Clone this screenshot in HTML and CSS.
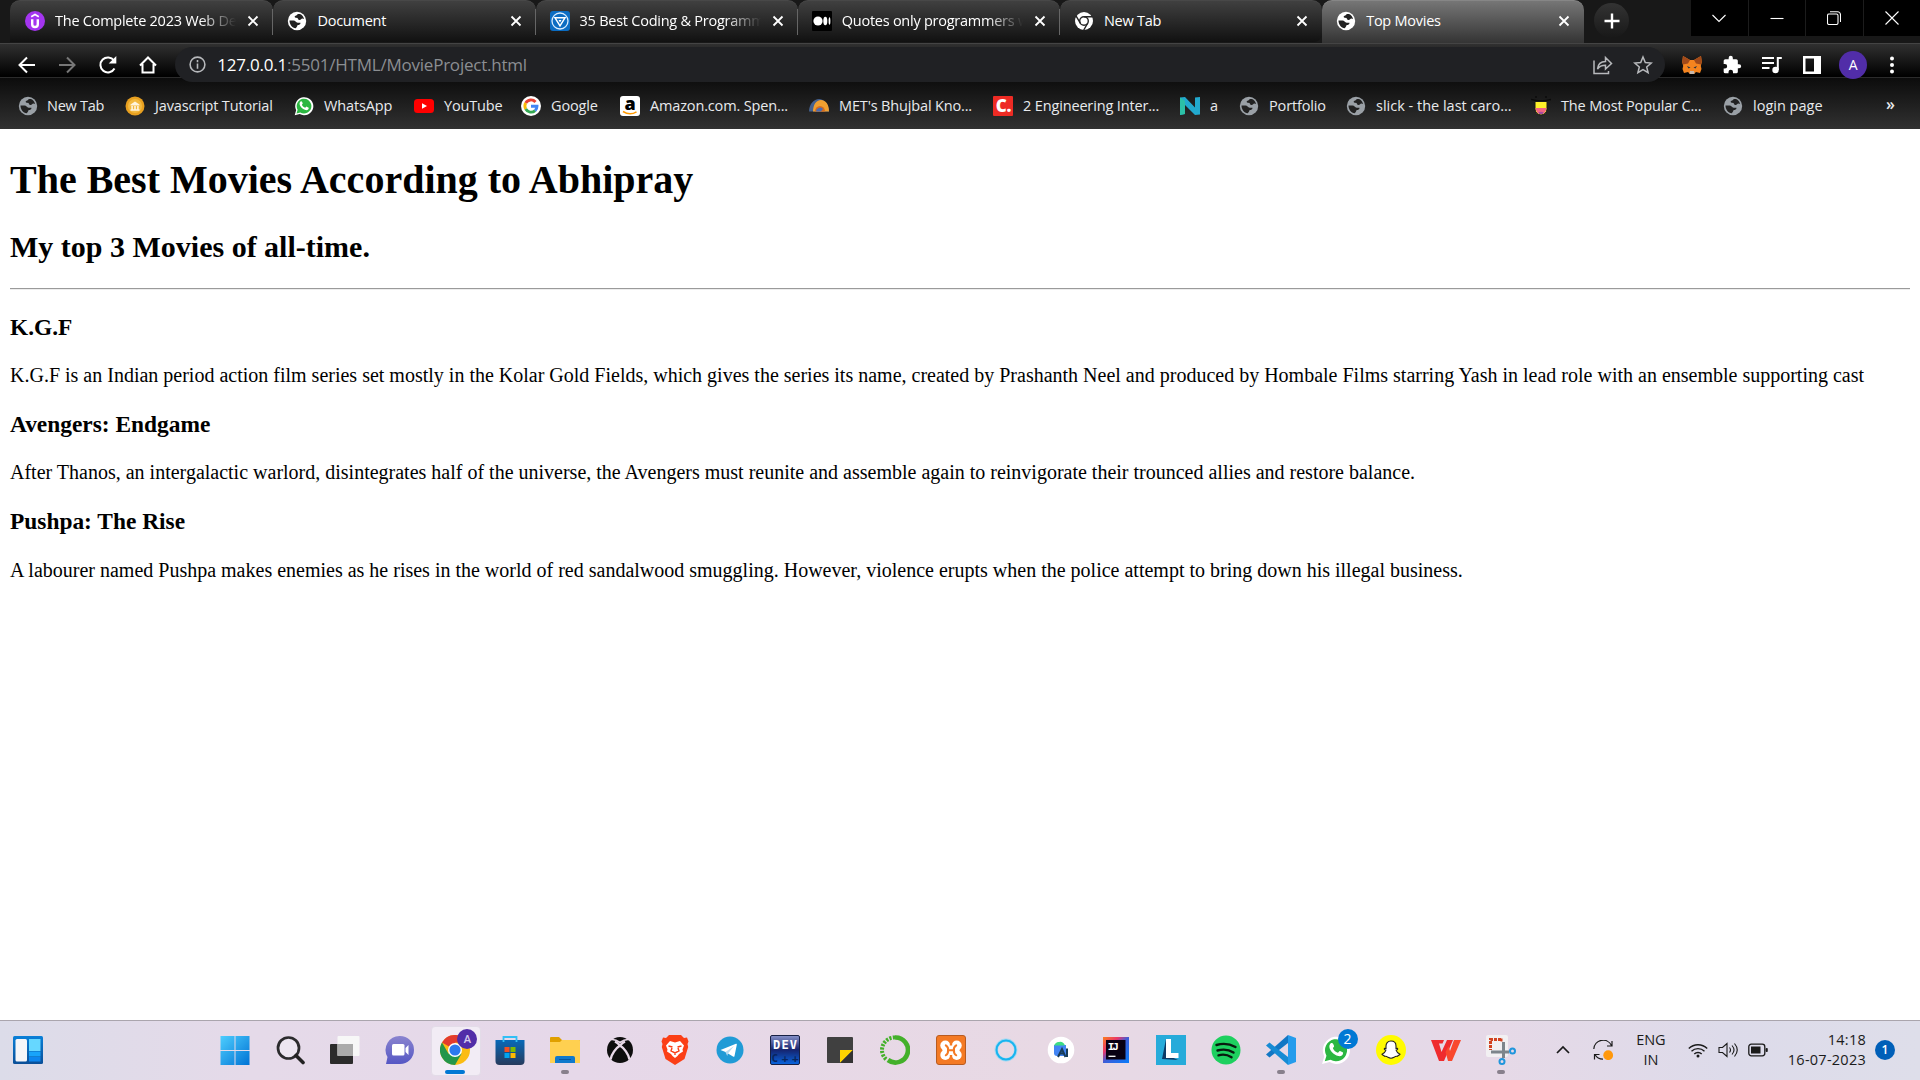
FILE: index.html
```html
<!DOCTYPE html>
<html lang="en">
<head>
<meta charset="utf-8">
<title>Top Movies</title>
<link rel="stylesheet" href="styles.css">
</head>
<body>
<svg class="defs" width="0" height="0">
  <symbol id="globe" viewBox="0 0 20 20"><circle cx="10" cy="10" r="9.200" fill="currentColor"/><path class="land" d="M2.500 9.500h4c2 0 2.200 2.200 4.200 2.200h2.800c0 2-1.400 2-2.600 2.400-1 .4-.6 2.200-2.200 3.200C5 16.800 2.500 13.500 2.500 9.500zM10.500 3c0 2-2.800 1.300-2.800 2.800 0 1.600 3 .5 3.400 2.200.3 1.500 2.400 1.300 3 .3.500-1 2-.8 3-.2-.5-2.300-2-4.300-4.100-5.100z"/></symbol>
  <symbol id="x" viewBox="0 0 12 12"><path d="M1.500 1.500l9 9M10.500 1.500l-9 9" stroke="#fff" stroke-width="1.800"/></symbol>
  <symbol id="wa" viewBox="0 0 28 28"><path d="M1 27l2-7A12.700 12.700 0 1 1 8 25.300z" fill="#fff"/><path d="M3.500 24.500l1.600-5.200a10.300 10.300 0 1 1 3.800 3.800z" fill="#2bb741"/><path d="M9.200 7.800c1.500-1 2.200.2 3 2.500.2.800-1.200 1.600-1 2.200 1 2 2.500 3.200 4.400 4 .8 0 1.400-2 2.200-1.600l2.800 1.400c.4 2.600-2.200 4-4.400 3.400C11.500 18.400 8 14.500 7.800 11c0-1.400.6-2.600 1.400-3.200z" fill="#fff"/></symbol>
</svg>
<header class="browser">
  <div class="tabs">
    <div class="tab first"><svg class="fav" viewBox="0 0 20 20"><circle cx="10" cy="10" r="10" fill="#a435f0"/><path d="M6.200 5.800L10 3.500l3.800 2.300" fill="none" stroke="#fff" stroke-width="1.600"/><path d="M7.200 8.200v5a2.800 2.800 0 0 0 5.600 0v-5" fill="none" stroke="#fff" stroke-width="2.400"/></svg><span class="title fade">The Complete 2023 Web Development</span><svg class="close"><use href="#x"/></svg></div>
    <div class="tab"><svg class="fav globe-w"><use href="#globe"/></svg><span class="title">Document</span><svg class="close"><use href="#x"/></svg></div>
    <div class="tab"><svg class="fav" viewBox="0 0 20 20"><rect width="20" height="20" rx="3" fill="#0a6cc2"/><circle cx="10" cy="10" r="8" fill="none" stroke="#d8ecff" stroke-width="1.300"/><path d="M5 6.800h10L10 14.800z" fill="none" stroke="#fff" stroke-width="1.500"/><path d="M8.500 9h3L10 11.500z" fill="#fff"/></svg><span class="title fade">35 Best Coding &amp; Programming Quotes</span><svg class="close"><use href="#x"/></svg></div>
    <div class="tab"><svg class="fav" viewBox="0 0 20 20"><rect width="20" height="20" rx="1" fill="#000"/><circle cx="6" cy="10" r="4.600" fill="#fff"/><ellipse cx="13.300" cy="10" rx="2" ry="4.300" fill="#fff"/><ellipse cx="17.500" cy="10" rx=".9" ry="3.800" fill="#fff"/></svg><span class="title fade">Quotes only programmers will get</span><svg class="close"><use href="#x"/></svg></div>
    <div class="tab last"><svg class="fav" viewBox="0 0 20 20"><circle cx="10" cy="10" r="9" fill="#fff"/><g fill="none" stroke="#262626" stroke-width="1.400"><circle cx="10" cy="10" r="4.300"/><path d="M10 5.700h8.500M6.300 12.200L2 4.800M13.700 12.200l-4.200 7.300"/></g></svg><span class="title">New Tab</span><svg class="close"><use href="#x"/></svg></div>
    <div class="tab active"><svg class="fav globe-w"><use href="#globe"/></svg><span class="title">Top Movies</span><svg class="close"><use href="#x"/></svg></div>
    <div class="plus"><svg width="16" height="16" viewBox="0 0 16 16"><path d="M8 .5v15M.5 8h15" stroke="#fff" stroke-width="2.400"/></svg></div>
    <div class="winbtns">
      <span><svg width="14" height="14" viewBox="0 0 14 14"><path d="M.5 4L7 10.500 13.500 4"/></svg></span>
      <span><svg width="14" height="14" viewBox="0 0 14 14"><path d="M.5 7.500h13"/></svg></span>
      <span><svg width="14" height="14" viewBox="0 0 14 14"><rect x=".5" y="3" width="10.500" height="10.500" rx="1.500"/><path d="M3 .8h7.500a3 3 0 0 1 3 3V11"/></svg></span>
      <span><svg width="14" height="14" viewBox="0 0 14 14"><path d="M.5.500l13 13M13.500.500l-13 13"/></svg></span>
    </div>
  </div>
  <div class="toolbar">
    <svg class="tb" viewBox="0 0 20 20"><path d="M18 10H3M10 2.500L2.500 10l7.500 7.500"/></svg>
    <svg class="tb dim" viewBox="0 0 20 20"><path d="M2 10h15M10 2.500l7.500 7.500-7.500 7.500"/></svg>
    <svg class="tb" viewBox="0 0 20 20"><path d="M16.500 13.500A7.500 7.500 0 1 1 16 5.500"/><path class="fill" d="M18.300 1v7.600h-7.600z"/></svg>
    <svg class="tb" viewBox="0 0 20 20"><path d="M2 10.500L10 2.500l8 8M4.500 9v8.500h11V9"/></svg>
    <div class="omnibox">
      <svg class="info" viewBox="0 0 18 18"><circle cx="9" cy="9" r="7" /><path d="M9 8v5M9 4.800v2"/></svg>
      <span class="url"><b>127.0.0.1</b>:5501/HTML/MovieProject.html</span>
      <svg class="share" viewBox="0 0 20 20"><path d="M1 5.500V18.500h14.500V16M4.500 14c.5-5 3.500-7.500 8-7.500V2.500L18.500 8.500l-6 5.500v-3.800c-3.500 0-6 .8-8 3.800z"/></svg>
      <svg class="star" viewBox="0 0 20 20"><path d="M10 2l2.300 5.500 6 .5-4.600 3.900 1.400 5.800-5.100-3.100-5.100 3.100 1.400-5.800L1.700 8l6-.5z"/></svg>
    </div>
    <svg class="ext" viewBox="0 0 20 20"><path d="M1 1l7 4h4l7-4 .8 6-1 4 .7 3-1.500 4-4-1-2 2H8l-2-2-4 1-1.500-4 .7-3-1-4z" fill="#f5841f"/><path d="M1 1l7 4-2 3.500L1 9.500.2 7zM19 1l-7 4 2 3.500 5 1L19.800 7z" fill="#a24a1a"/><path d="M5 11l3.500 1.500-2 1zM15 11l-3.500 1.500 2 1z" fill="#233447"/><path d="M8 16h4l.5 3h-5z" fill="#c8b8ac"/></svg>
    <svg class="ext" viewBox="0 0 24 24"><path fill="#fff" d="M20.500 11H19V7a2 2 0 0 0-2-2h-4V3.500a2.500 2.500 0 0 0-5 0V5H4a2 2 0 0 0-2 2v3.800h1.500a2.700 2.700 0 0 1 0 5.400H2V20a2 2 0 0 0 2 2h3.800v-1.500a2.700 2.700 0 0 1 5.400 0V22H17a2 2 0 0 0 2-2v-4h1.500a2.500 2.500 0 0 0 0-5z"/></svg>
    <svg class="ext" viewBox="0 0 20 20"><path d="M0 3h12M0 8h12M0 13h7.500M15.800 15V3h4" fill="none" stroke="#fff" stroke-width="2"/><circle cx="13.500" cy="15" r="3.200" fill="#fff"/></svg>
    <svg class="ext" viewBox="0 0 20 20"><path fill="#fff" fill-rule="evenodd" d="M1 1h18v18H1zM3.500 3.500v13H12v-13z"/></svg>
    <div class="avatar">A</div>
    <svg class="ext dots" viewBox="0 0 20 20"><g fill="#fff"><circle cx="10" cy="3.500" r="2"/><circle cx="10" cy="10" r="2"/><circle cx="10" cy="16.500" r="2"/></g></svg>
  </div>
  <nav class="bookmarks">
    <a><svg class="globe-g"><use href="#globe"/></svg>New Tab</a>
    <a><svg viewBox="0 0 20 20"><circle cx="10" cy="10" r="9.500" fill="#e8a020"/><circle cx="10" cy="10" r="7" fill="#f3b940"/><path d="M5.500 8.500L10 5.500l4.500 3v1h-9zM6.300 10h1.600v3.200H6.300zM9.200 10h1.600v3.200H9.200zM12.100 10h1.600v3.200h-1.600zM5.500 13.200h9v1.500h-9z" fill="#fff4df"/></svg>Javascript Tutorial</a>
    <a><svg><use href="#wa"/></svg>WhatsApp</a>
    <a><svg viewBox="0 0 20 20"><rect y="3" width="20" height="14" rx="3.500" fill="#f00"/><path d="M8 7.200l5 2.800-5 2.800z" fill="#fff"/></svg>YouTube</a>
    <a><svg viewBox="0 0 20 20"><circle cx="10" cy="10" r="10" fill="#fff"/><g fill="none" stroke-width="2.900"><path d="M4.700 7a6.100 6.100 0 0 1 9.800-1.100" stroke="#ea4335"/><path d="M4.700 13a6.100 6.100 0 0 1 0-6" stroke="#fbbc05"/><path d="M4.700 13a6.100 6.100 0 0 0 9.400 1.600" stroke="#34a853"/><path d="M14.100 14.600A6 6 0 0 0 16 10.200h-6" stroke="#4285f4"/></g></svg>Google</a>
    <a><svg viewBox="0 0 20 20"><rect width="20" height="20" rx="3" fill="#fff"/><text x="10" y="14" text-anchor="middle" font-family="Open Sans" font-weight="800" font-size="18" fill="#000">a</text><path d="M3 15.500q7 4.500 13.500.3" fill="none" stroke="#f90" stroke-width="1.500"/></svg>Amazon.com. Spen...</a>
    <a><svg viewBox="0 0 20 20"><path d="M0 15.500C0 8 5 3 10 3s10 5 10 12.500z" fill="#44618f"/><path d="M4 15.500C4 9 7 4 12 4s8 5 8 11.500z" fill="#f0a030"/><path d="M6 15.500a5 5.500 0 0 1 10 0z" fill="#d66c1e"/><path d="M7 15.500a4 4 0 0 1 7-2.500l-2 2.500z" fill="#4a6cb0"/></svg>MET's Bhujbal Kno...</a>
    <a><svg viewBox="0 0 20 20"><rect width="20" height="20" rx="1" fill="#ee2b24"/><text x="10.500" y="16" text-anchor="middle" font-family="Open Sans" font-weight="800" font-size="17" fill="#fff">C.</text></svg>2 Engineering Inter...</a>
    <a><svg viewBox="0 0 20 20"><path d="M0 1.500L5 1l10 10.500V1.500L20 1v17.500l-5 .5L5 9v9l-5 1z" fill="#22a9ce"/><path d="M0 1.500L5 5v13l-5 1z" fill="#2cc0a6"/></svg>a</a>
    <a><svg class="globe-g"><use href="#globe"/></svg>Portfolio</a>
    <a class="wide"><svg class="globe-g"><use href="#globe"/></svg>slick - the last caro...</a>
    <a><svg viewBox="0 0 20 20"><path d="M0 3.500q10 3 20 0M4 1h2M14 1h2" fill="none" stroke="#0b0b0b" stroke-width="1.500"/><path d="M4 5.500h12V13a6 6 0 0 1-12 0z" fill="#fff02a" stroke="#181818"/><path d="M4.500 12h11a5.500 6 0 0 1-11 0z" fill="#f26483"/><path d="M7 17a4 3.500 0 0 1 6 0q-3 2.500-6 0z" fill="#a54ba0"/></svg>The Most Popular C...</a>
    <a class="wide"><svg class="globe-g"><use href="#globe"/></svg>login page</a>
    <a class="more">»</a>
  </nav>
</header>

<main class="page">
  <h1>The Best Movies According to Abhipray</h1>
  <h2>My top 3 Movies of all-time.</h2>
  <hr>
  <h3>K.G.F</h3>
  <p>K.G.F is an Indian period action film series set mostly in the Kolar Gold Fields, which gives the series its name, created by Prashanth Neel and produced by Hombale Films starring Yash in lead role with an ensemble supporting cast</p>
  <h3>Avengers: Endgame</h3>
  <p>After Thanos, an intergalactic warlord, disintegrates half of the universe, the Avengers must reunite and assemble again to reinvigorate their trounced allies and restore balance.</p>
  <h3>Pushpa: The Rise</h3>
  <p>A labourer named Pushpa makes enemies as he rises in the world of red sandalwood smuggling. However, violence erupts when the police attempt to bring down his illegal business.</p>
</main>

<footer class="taskbar">
  <svg class="widgets" viewBox="0 0 30 30"><defs><linearGradient id="wg" x2="0" y2="1"><stop stop-color="#0a80d8"/><stop offset="1" stop-color="#0a4f98"/></linearGradient></defs><rect y="1" width="30" height="28" rx="1.500" fill="url(#wg)"/><rect x="2.500" y="4" width="11.500" height="22.500" rx="1.500" fill="#f6f6f8"/><path d="M16 4h11.500v12H16z" fill="#66d7ff"/><path d="M16 16.500h11.500v5H16z" fill="#18a4fa"/><path d="M16 22h11.500v4.500H16z" fill="#0d86ee"/></svg>
  <div class="apps">
    <div><svg viewBox="0 0 30 30"><defs><linearGradient id="win" gradientUnits="userSpaceOnUse" x1="0" y1="0" x2="30" y2="30"><stop stop-color="#4fd0ff"/><stop offset="1" stop-color="#0072d4"/></linearGradient></defs><path d="M.5 1h14v14h-14zM15.500 1h14v14h-14zM.5 16h14v14h-14zM15.500 16h14v14h-14z" fill="url(#win)"/></svg></div>
    <div><svg viewBox="0 0 30 30"><circle cx="13.500" cy="13" r="10.500" fill="#ece6f1" stroke="#2b2b2d" stroke-width="2.700"/><path d="M21 20.500l7 7" stroke="#222" stroke-width="3.600" stroke-linecap="round"/></svg></div>
    <div><svg viewBox="0 0 30 30"><rect y="9" width="23" height="20" rx="1" fill="#2b2b2b"/><rect x="7.500" y="1" width="22" height="20" rx="1" fill="#f7f7f7"/><path d="M7.500 9H23v12H7.500z" fill="#aaa"/></svg></div>
    <div><svg viewBox="0 0 30 30"><defs><linearGradient id="chat" x2="0" y2="1"><stop stop-color="#8a84cf"/><stop offset="1" stop-color="#5557c4"/></linearGradient></defs><path d="M15 1A14 14 0 0 1 15 29H1l1.500-7A14 14 0 0 1 15 1z" fill="url(#chat)"/><rect x="7" y="9" width="12.500" height="11.500" rx="1.500" fill="#fff"/><path d="M20.500 13l3-3v10l-3-3z" fill="#fff"/></svg></div>
    <div class="on"><svg viewBox="0 0 30 30"><circle cx="15" cy="15" r="15" fill="#fbbc12"/><path d="M15 15L2 7.500A15 15 0 0 1 28 7.500H15z" fill="#e33b2e"/><path d="M2 7.500A15 15 0 0 0 15 30l6.500-11.300L15 15 8.500 18.800z" fill="#24964a"/><circle cx="15" cy="15" r="7" fill="#fff"/><circle cx="15" cy="15" r="5.600" fill="#2d79ee"/></svg><i class="badge purple">A</i><u></u></div>
    <div><svg viewBox="0 0 30 30"><defs><linearGradient id="st" x2="0" y2="1"><stop stop-color="#0869b8"/><stop offset="1" stop-color="#273b5d"/></linearGradient></defs><path d="M.5 5h29v21a4 4 0 0 1-4 4h-21a4 4 0 0 1-4-4z" fill="url(#st)"/><path d="M8.500 7V2h13v5" fill="none" stroke="#31bff5" stroke-width="1.800"/><path d="M9.500 12h5v5h-5z" fill="#f25022"/><path d="M15.500 12h5v5h-5z" fill="#7fba00"/><path d="M9.500 18h5v5h-5z" fill="#00a4ef"/><path d="M15.500 18h5v5h-5z" fill="#ffb900"/></svg></div>
    <div><svg viewBox="0 0 30 30"><path d="M0 3q0-1 1-1h8l3 3h17q1 0 1 1v6H0z" fill="#e0a000"/><path d="M0 7h10l2-2h17q1 0 1 1v22H0z" fill="#ffd050"/><path d="M5 28v-5q0-2 2-2h16q2 0 2 2v5z" fill="#1079cc"/><path d="M9 24.500h12" stroke="#07569f"/></svg><s></s></div>
    <div><svg viewBox="0 0 30 30"><circle cx="15" cy="15" r="13" fill="#0e0e0e"/><path d="M6 4.500C10 4 13 6 15 7.500 17 6 20 4 24 4.500" fill="none" stroke="#e8d9e8" stroke-width="1.600"/><path d="M15 10.500C11 13 6.500 19 5.500 24.500M15 10.500C19 13 23.500 19 24.500 24.500M10 6.500q2.500 1.300 5 4 2.500-2.700 5-4" fill="none" stroke="#e8d9e8" stroke-width="2.400"/></svg></div>
    <div><svg viewBox="0 0 30 30"><path d="M9 0h12l3 3 3-.5 1.500 4-1 2.500.7 3-3.700 12L15 30 5.500 24 1.800 12l.7-3-1-2.500L3 2.500 6 3z" fill="#fb3f16"/><path d="M10 6l5 1.500L20 6l4 4.500-1.500 4 .5 2-4 2.500-1.500 2L15 23l-2.500-2L11 19l-4-2.500.5-2L6 10.500z" fill="#fff"/><path d="M8.500 11l4 1M21.500 11l-4 1M12 13l-1 3 4 2 4-2-1-3M15 18v2" fill="none" stroke="#fb3f16" stroke-width="1.400"/></svg></div>
    <div><svg viewBox="0 0 30 30"><circle cx="15" cy="15" r="13.500" fill="#209bd6"/><path d="M5.500 15l15.500-6.200c.7-.2 1 .2.800.9L19.500 21c-.2 1-.8 1-1.500.6L10.500 17z" fill="#fff"/><path d="M10.500 17l8.500-6-6 7.500-.8 2.500z" fill="#b8dbef"/></svg></div>
    <div><svg viewBox="0 0 30 30"><defs><linearGradient id="dev" x2="0" y2="1"><stop stop-color="#8792c9"/><stop offset=".5" stop-color="#15246f"/><stop offset="1" stop-color="#0865e0"/></linearGradient></defs><rect x=".5" y=".5" width="29" height="29" rx="1.500" fill="url(#dev)" stroke="#172044"/><text x="15" y="13.500" text-anchor="middle" textLength="24" font-size="12" font-weight="700" font-family="DejaVu Sans Mono" fill="#fff">DEV</text><text x="15" y="27" text-anchor="middle" textLength="27" font-size="11" font-weight="700" font-family="DejaVu Sans Mono" fill="#08265f">C++</text></svg></div>
    <div><svg viewBox="0 0 30 30"><path d="M3 2h24q1 0 1 1v25H3q-1 0-1-1V3q0-1 1-1z" fill="#404040"/><path d="M15 15h13L15 28z" fill="#ffd500"/><path d="M28 15v13H15z" fill="#333"/></svg></div>
    <div><svg viewBox="0 0 30 30"><path d="M15 2.500a12.500 12.500 0 1 1-7 22.500" fill="none" stroke="#43b02a" stroke-width="4.700"/><path d="M15 2.500A12.500 12.500 0 0 0 7 25" fill="none" stroke="#43b02a" stroke-width="4" stroke-dasharray="2.200 1.300"/></svg></div>
    <div><svg viewBox="0 0 30 30"><rect x=".5" y=".5" width="29" height="29" rx="2.500" fill="#f47a24" stroke="#b85b20"/><g fill="#fff"><circle cx="9.300" cy="10.500" r="5"/><circle cx="20.700" cy="10.500" r="5"/><circle cx="9.300" cy="20" r="5"/><circle cx="20.700" cy="20" r="5"/><path d="M6 13l18 0-1 5H7zM9 9h12v12H9z"/></g><path d="M9.800 10.300q3 2 2.200 5 .5 3-2.200 5M20.200 10.300q-3 2-2.200 5-.5 3 2.200 5M12 15.300h6" fill="none" stroke="#f47a24" stroke-width="2" stroke-linecap="round"/><path d="M13.800 5h2.400v5.500h-2.400zM13.800 20h2.400v5.500h-2.400z" fill="#f47a24"/></svg></div>
    <div><svg viewBox="0 0 30 30"><circle cx="15" cy="15" r="9.700" fill="none" stroke="#9fd8f2" stroke-width="3.400"/><circle cx="15" cy="15" r="9.500" fill="none" stroke="#19b4ef" stroke-width="2"/></svg></div>
    <div><svg viewBox="0 0 30 30"><circle cx="15" cy="15" r="13.300" fill="#fff"/><path d="M8 10h12v11h-9a3 3 0 0 1-3-3z" fill="#4285f4"/><path d="M8 10.500q2-4 5-3.500 4-1 6 3.500z" fill="#3ddc84"/><path d="M12 22l4-8 3.500 8M13.500 18.500h4M21 13.500V22" fill="none" stroke="#173b58" stroke-width="2"/></svg></div>
    <div><svg viewBox="0 0 30 30"><defs><linearGradient id="ij" x2="1" y2="1"><stop stop-color="#fc801d"/><stop offset=".3" stop-color="#e93569"/><stop offset=".5" stop-color="#3d5ed8"/><stop offset="1" stop-color="#087cfa"/></linearGradient></defs><rect x="2" y="2" width="26" height="26" fill="url(#ij)"/><path d="M5 5h19.500v19.500H5z" fill="#080012"/><text x="6.800" y="15" font-family="Liberation Mono" font-weight="700" font-size="11" textLength="11" fill="#fff">IJ</text><path d="M7.500 21.300h7" stroke="#fff" stroke-width="1.300"/></svg></div>
    <div><svg viewBox="0 0 30 30"><path d="M0 0h30v30H0z" fill="#26abda"/><path d="M10 4L6 24l16 1-9-4z" fill="#0c3a66"/><path d="M10 4h5v14h7.500v5H10z" fill="#fff"/></svg></div>
    <div><svg viewBox="0 0 30 30"><circle cx="15" cy="15" r="14.500" fill="#1ed05f"/><path d="M5.500 10q10-3 19 2M6.500 15.500q9-2.500 16 2M7.500 20.300q7-2 13 2" fill="none" stroke="#081a0e" stroke-width="2.400" stroke-linecap="round"/></svg></div>
    <div><svg viewBox="0 0 30 30"><path d="M22 0v8L3.500 22.500 0 19.500z" fill="#1277c4"/><path d="M22 30v-8L3.500 7.500 0 10.500z" fill="#168bd4"/><path d="M22 0l8 3v24l-8 3z" fill="#259cec"/></svg><s></s></div>
    <div><svg viewBox="0 0 28 28"><use href="#wa"/></svg><i class="badge blue">2</i></div>
    <div><svg viewBox="0 0 30 30"><circle cx="15" cy="15" r="15" fill="#fffb00"/><path d="M15 6c3.500 0 5 2.500 5 5v2.500l1.500-.2c.7.600-.5 1.500-1.300 2 .6 2 2 3.200 3.800 4-.5 1-2 1-2.500 2-1.500-.3-2.300 0-3.500 1-2 1.200-4 1.200-6 0-1.200-1-2-1.300-3.500-1-.5-1-2-1-2.500-2 1.800-.8 3.200-2 3.800-4-.8-.5-2-1.400-1.300-2l1.500.2V11c0-2.500 1.500-5 5-5z" fill="#fff" stroke="#222" stroke-width="1.100"/></svg></div>
    <div><svg viewBox="0 0 30 30"><path d="M0 5h13l-1.500 3.500H8L10.500 17 16 5h6l-9 21H8z" fill="#ef2b2e"/><path d="M14.500 17l2.500 9h4L30 5h-7l-4 11-1.500-5z" fill="#f9482d"/></svg></div>
    <div><svg viewBox="0 0 30 30"><rect width="22" height="22" rx="2" fill="#f2f0f2"/><path d="M15 4.500H4.500V15" fill="none" stroke="#d24320" stroke-width="3" stroke-dasharray="3 1"/><path d="M15.500 3.500v3" stroke="#d24320" stroke-width="2"/><path d="M5 17h18M17.500 7v16" stroke="#7d858b" stroke-width="3"/><g fill="none" stroke="#2096dc" stroke-width="2"><circle cx="26.500" cy="16" r="2.500"/><circle cx="16" cy="26.500" r="2.500"/></g></svg><s></s></div>
  </div>
  <div class="tray">
    <svg class="chev" viewBox="0 0 14 14"><path d="M1 10l6-6 6 6" stroke-width="1.700"/></svg>
    <svg class="sync" viewBox="0 0 20 20"><path d="M.8 9A9.300 9.300 0 0 1 18.500 5.500M19 1v5h-5M10 19.200A9 9 0 0 1 2 14.500M1.500 19.500v-5h5" stroke-width="1.200"/><circle cx="15.200" cy="15.200" r="4.900" fill="#ff980b" stroke="none"/></svg>
    <div class="lang">ENG<br>IN</div>
    <svg class="wifi" viewBox="0 0 20 16"><g stroke-width="1.400"><path d="M.8 6.500a13 13 0 0 1 18.400 0M3.500 9.300a9.300 9.300 0 0 1 13 0M6.300 12a5.300 5.300 0 0 1 7.400 0"/></g><circle cx="10" cy="14" r="1.500" fill="#1a1a1a" stroke="none"/></svg>
    <svg class="vol" viewBox="0 0 20 16"><g stroke-width="1.100"><path d="M1 5.500h3.500L9 1.500v13l-4.500-4H1z"/><path d="M11.500 5.500q2 2.500 0 5M14 3.500q4 4.500 0 9M16.500 1.500q5.500 6.500 0 13"/></g></svg>
    <svg class="bat" viewBox="0 0 20 14"><rect x=".8" y="1.200" width="16" height="11.600" rx="2.500" stroke-width="1.300"/><rect x="3" y="3.500" width="9.500" height="7" fill="#1a1a1a" stroke="none"/><path d="M18 5.500h1.300v3H18z" fill="#1a1a1a" stroke-width=".8"/></svg>
    <div class="clock">14:18<br>16-07-2023</div>
    <div class="notif">1</div>
  </div>
</footer>
</body>
</html>
```
FILE: styles.css
```css
* { box-sizing: border-box; }
html, body { height: 100%; }
body { margin: 0; display: flex; flex-direction: column; background: #fff; overflow: hidden; font-family: "Open Sans", "Noto Sans", sans-serif; }
svg { display: block; flex: none; }
.defs { display: none; }

.browser { height: 129px; flex: none; color: #fff; background: #161616; }
.tabs { height: 43px; display: flex; padding-left: 10px; background: #181818; }
.tab { width: 262.200px; height: 42px; padding: 0 14px 2px 14px; display: flex; align-items: center; background: linear-gradient(#404040, #111); border-radius: 10px 10px 0 0; border-top: 1px solid #484848; position: relative; flex: none; }
.tab.first { width: 263.400px; padding-left: 15px; }
.tab:not(.active):not(.last)::after { content: ""; position: absolute; right: 0; top: 8px; width: 1px; height: 26px; background: #666; }
.tab.last { border-radius: 10px 10px 8px 0; }
.tab.active { height: 43px; padding-bottom: 3px; background: linear-gradient(#767676, #343434); border-top-color: #868686; }
.fav { width: 20px; height: 20px; }
.globe-w { color: #fff; }
.globe-w .land, .land { fill: #222; }
.globe-g { color: #9aa0a6; }
.title { flex: 1; margin-left: 10px; margin-right: 11px; overflow: hidden; white-space: nowrap; font-size: 14.500px; letter-spacing: -.25px; line-height: 20px; }
.fade { -webkit-mask-image: linear-gradient(90deg, #000 calc(100% - 36px), transparent); mask-image: linear-gradient(90deg, #000 calc(100% - 36px), transparent); }
.close { width: 12px; height: 12px; }
.plus { width: 35px; height: 35px; margin: 3px 0 0 10px; border-radius: 50%; background: linear-gradient(#333, #181818); display: grid; place-items: center; }
.winbtns { margin-left: auto; display: flex; height: 36px; width: 229px; background: #000; }
.winbtns span { flex: 1; display: grid; place-items: center; border-right: 1px solid #1c1c1c; }
.winbtns span:last-child { border: 0; }
.winbtns svg { fill: none; stroke: #fff; stroke-width: 1.100; }

.toolbar { height: 34px; display: flex; align-items: center; padding: 9px 18px 0 17px; border-top: 1px solid #444; background: linear-gradient(#303030, #000); border-bottom: 1px solid #000; position: relative; z-index: 1; }
.tb { width: 20px; height: 20px; margin-right: 20.300px; fill: none; stroke: #fff; stroke-width: 2; }
.tb .fill { fill: #fff; stroke: none; }
.tb.dim { stroke: #777; }
.omnibox { width: 1490px; height: 35px; margin: 0 17px 0 -3px; border-radius: 18px; background: #202124; display: flex; align-items: center; padding: 0 12px 0 13px; flex: none; }
.omnibox svg { fill: none; stroke: #b7b9bc; stroke-width: 1.500; }
.info { width: 19px; height: 19px; }
.url { flex: 1; margin-left: 10px; font-size: 17px; letter-spacing: -.22px; color: #8b8e92; white-space: nowrap; }
.url b { font-weight: 400; color: #fff; }
.share, .star { width: 20px; height: 20px; margin-left: 20px; }
.ext { width: 20px; height: 20px; margin-right: 20px; }
.ext + .avatar { margin-left: -3px; }
.avatar { width: 28px; height: 28px; border-radius: 50%; background: #512da8; font-size: 14px; line-height: 28px; text-align: center; margin-right: 15px; flex: none; }
.dots { margin: 0; }

.bookmarks { height: 52px; display: grid; grid-template-columns: 107px 169px 120px 107px 99px 189px 184px 187px 59px 107px 185px 192px 160px 20px; padding-left: 18px; align-items: center; background: linear-gradient(#0c0c0c, #313131); border-top: 1px solid #2b2b2b; font-size: 14.500px; letter-spacing: -.15px; color: #e8eaed; padding-top: 4px; }
.bookmarks a { display: flex; align-items: center; gap: 10px; white-space: nowrap; }
.bookmarks a:first-child { gap: 9px; letter-spacing: -.25px; }
.bookmarks .wide { letter-spacing: 0; }
.bookmarks svg { width: 20px; height: 20px; }
.bookmarks .more { font-weight: 600; font-size: 16px; padding: 0 0 3px 3px; }

.page { flex: 1; padding: 0 10px; font: 20px "Liberation Serif", "Times New Roman", serif; color: #000; white-space: nowrap; }
.page h1 { font-size: 40px; margin: 27.800px 0 26.800px; line-height: 46px; }
.page h2 { font-size: 30px; margin: 24.900px 0; line-height: 34px; }
.page h3 { font-size: 23.400px; margin: 23.400px 0; line-height: 27px; }
.page p { margin: 20px 0; line-height: 23.400px; }
.page hr { margin: 10px 0; border: 0; border-top: 1px solid #9a9a9a; border-bottom: 1px solid #ededed; }

.taskbar { height: 60px; flex: none; border-top: 1px solid #aaa5ad; display: flex; align-items: center; padding: 0 0 2px 13px; background: linear-gradient(90deg, #dcdce9 0, #e5dae9 13%, #e6d8e9 30%, #e8d9e4 55%, #e4d9e8 70%, #e6d9e7 78%, #dddbea 90%, #dedeea 100%); }
.widgets { width: 30px; height: 30px; }
.apps { display: flex; margin-left: 164px; }
.apps > div { width: 55.090px; height: 48px; display: grid; place-items: center; position: relative; }
.apps svg { width: 30px; height: 30px; }
.apps .on::before { content: ""; position: absolute; left: 4px; top: 0; width: 48px; height: 48px; border-radius: 4px; background: #f2ecf5; border: 1px solid #e3dce8; }
.apps .on svg { position: relative; }
.apps u, .apps s { position: absolute; left: 50%; bottom: 0; transform: translateX(-50%); height: 4px; border-radius: 2px; }
.apps u { width: 20px; background: #0078d4; }
.apps s { width: 8px; background: #88808c; }
.badge { position: absolute; left: 29px; top: 3px; width: 20px; height: 20px; border-radius: 50%; color: #fff; font-style: normal; font-size: 11px; line-height: 20px; text-align: center; }
.purple { left: 30px; background: #512da8; color: #d6cbee; font-weight: 600; }
.blue { background: #0078d4; font-size: 14px; }
.tray { flex: 1; display: flex; align-items: center; font-size: 14.500px; line-height: 20px; color: #1b1b1b; letter-spacing: -.1px; }
.tray svg { fill: none; stroke: #1a1a1a; }
.chev { width: 14px; height: 14px; margin-left: 27px; }
.sync { width: 20px; height: 20px; margin-left: 23px; }
.lang { width: 40px; text-align: center; margin-left: 18px; }
.wifi { width: 20px; height: 16px; margin-left: 17px; }
.vol { width: 20px; height: 16px; margin-left: 10px; }
.bat { width: 20px; height: 14px; margin-left: 10px; }
.clock { width: 90px; text-align: right; margin-left: auto; letter-spacing: .25px; }
.notif { width: 20px; height: 20px; border-radius: 50%; background: #005fb8; color: #fff; font-size: 12px; font-weight: 600; text-align: center; margin: 0 25px 0 9px; }
```
